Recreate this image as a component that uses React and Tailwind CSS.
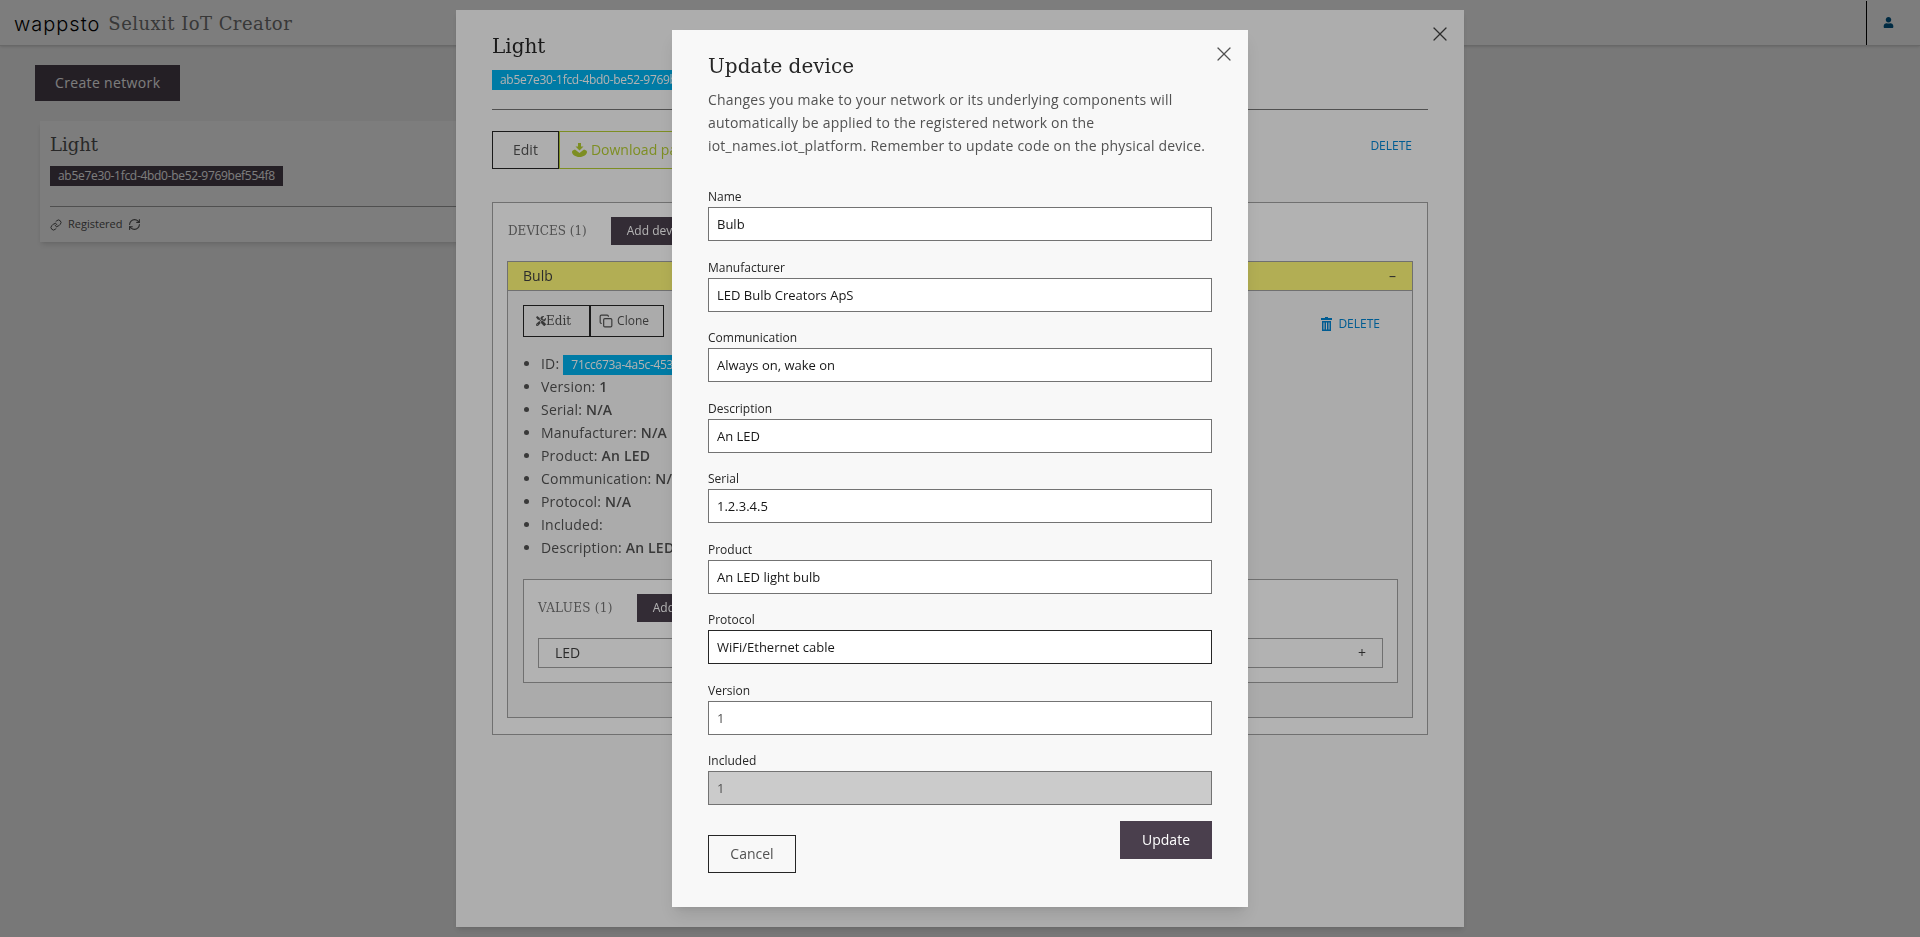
import React from 'react'
import { X, Link, RefreshCw, Copy } from 'lucide-react'
import { FaUser, FaTools } from 'react-icons/fa'

const sans = { fontFamily: '"Open Sans", sans-serif' }
const slab = { fontFamily: '"DejaVu Serif", serif' }

const fields = [
  { label: 'Name', value: 'Bulb' },
  { label: 'Manufacturer', value: 'LED Bulb Creators ApS' },
  { label: 'Communication', value: 'Always on, wake on' },
  { label: 'Description', value: 'An LED' },
  { label: 'Serial', value: '1.2.3.4.5' },
  { label: 'Product', value: 'An LED light bulb' },
  { label: 'Protocol', value: 'WiFi/Ethernet cable', focus: true },
  { label: 'Version', value: '1', muted: true },
  { label: 'Included', value: '1', muted: true, disabled: true },
]

const details = [
  ['Version', '1'],
  ['Serial', 'N/A'],
  ['Manufacturer', 'N/A'],
  ['Product', 'An LED'],
  ['Communication', 'N/A'],
  ['Protocol', 'N/A'],
  ['Included', ''],
  ['Description', 'An LED'],
]

const DownloadIcon = () => (
  <svg width="15" height="14" viewBox="0 0 15 14" fill="currentColor">
    <rect x="6" y="0" width="3" height="4" />
    <path d="M3.5 3.5h8L7.5 7.5z" />
    <path d="M0 9c0-1.2 1.2-2 3-2.4L7.5 10 12 6.6c1.800.4 3 1.200 3 2.400C15 11.500 11.600 14 7.500 14S0 11.500 0 9z" />
  </svg>
)

const TrashIcon = () => (
  <svg width="11" height="14" viewBox="0 0 11 14" fill="currentColor">
    <path d="M4 0h3v1h4v2H0V1h4z" />
    <path fillRule="evenodd" d="M1 4h9v10H1zM2.500 5.500v7h1v-7zM5 5.500v7h1v-7zM7.500 5.500v7h1v-7z" />
  </svg>
)

const Page = () => (
  <div className="min-h-screen bg-neutral-100">
    <header className="flex h-11.5 items-center justify-between border-b border-neutral-300 bg-white shadow-sm">
      <div className="flex items-center pt-0.5">
        <span className="ml-3.5 text-xl font-light tracking-wider text-black" style={{ fontFamily: 'Inter, sans-serif' }}>wappsto</span>
        <span className="ml-2 text-lg tracking-wide text-neutral-500" style={slab}>Seluxit IoT Creator</span>
      </div>
      <div className="flex h-11 w-13.5 items-center border-l border-black pl-4 text-sky-800">
        <FaUser size={11} />
      </div>
    </header>
    <button className="ml-8.75 mt-4.75 bg-[#4a3f4d] px-5 py-2 text-sm tracking-wide text-white" style={sans}>Create network</button>
    <div className="ml-10 mt-5 w-lg bg-white px-2.5 shadow-md" style={sans}>
      <h2 className="pt-3 text-lg leading-6 text-neutral-600" style={slab}>Light</h2>
      <span className="mt-2.25 inline-block bg-[#4a3f4d] px-2 py-0.5 text-xs tracking-tight text-white">ab5e7e30-1fcd-4bd0-be52-9769bef554f8</span>
      <div className="mt-5 flex h-9 items-center gap-1.5 border-t border-neutral-400 text-[11px] text-neutral-600">
        <Link size={12} />
        <span>Registered</span>
        <RefreshCw size={13} />
      </div>
    </div>
  </div>
)

const Network = () => (
  <div className="relative mt-2.5 h-[917px] w-[1008px] bg-[#f8f8f8] px-9 shadow-md" style={sans}>
    <X className="absolute right-3 top-3 text-neutral-700" size={24} strokeWidth={1.2} />
    <h1 className="pt-6 text-xl leading-6 text-neutral-800" style={slab}>Light</h1>
    <span className="mt-3 inline-block bg-[#00b0ec] px-2 py-0.5 text-xs tracking-tight text-white">ab5e7e30-1fcd-4bd0-be52-9769bef554f8</span>
    <div className="mt-4.75 border-t border-neutral-500" />
    <div className="mt-5.25 flex items-center">
      <button className="border border-neutral-800 px-5 py-2 text-sm text-neutral-600">Edit</button>
      <button className="flex items-center gap-1 border border-[#b4cc33] px-3 py-2 text-sm text-[#b4cc33]">
        <DownloadIcon />
        Download package
      </button>
      <span className="ml-auto mr-4 pb-2 text-xs text-sky-600">DELETE</span>
    </div>

    <section className="mt-8.25 border border-neutral-400 bg-white px-3.5 pb-4">
      <div className="flex items-center pt-3.5">
        <span className="pl-px text-xs text-neutral-500" style={slab}>DEVICES (1)</span>
        <button className="ml-6 bg-[#4a3f4d] px-4 py-1.5 text-xs text-white">Add device</button>
      </div>
      <div className="mt-4 border border-neutral-400 bg-neutral-100">
        <div className="flex h-7 items-center justify-between bg-[#fffa79] pl-3.75 pr-4 text-sm text-neutral-700">
          <span>Bulb</span>
          <span>–</span>
        </div>
        <div className="border-t border-neutral-400 pb-8.5 pl-3.75 pr-3.5">
          <div className="flex items-center pt-3.5">
            <button className="flex h-8 items-center border border-neutral-800 pl-3 pr-4.5 text-xs text-neutral-600" style={slab}>
              <FaTools size={10} />
              Edit
            </button>
            <button className="flex h-8 items-center gap-1 border border-neutral-800 pl-2 pr-3.5 text-xs text-neutral-600">
              <Copy size={14} />
              Clone
            </button>
            <span className="ml-auto mr-4.5 mt-1.5 flex items-center gap-1.5 text-xs text-sky-600">
              <TrashIcon />
              DELETE
            </span>
          </div>
          <ul className="mt-3.75 list-disc pl-4.5 text-sm leading-5.75 tracking-[0.2px] text-neutral-600">
            <li>
              ID:
              <span className="ml-1 inline-block bg-[#00b0ec] px-2 text-xs leading-5 tracking-tight text-white">71cc673a-4a5c-4531-9c1e-8a1f0d3e5b77</span>
            </li>
            {details.map((item) => (
              <li key={item[0]}>
                {item[0]}: <b className="font-semibold">{item[1]}</b>
              </li>
            ))}
          </ul>
          <div className="mt-5 border border-neutral-400 bg-white px-3.5 pb-3.5">
            <div className="flex items-center pt-3.5">
              <span className="text-xs tracking-wide text-neutral-500" style={slab}>VALUES (1)</span>
              <button className="ml-6 bg-[#4a3f4d] px-4 py-1.5 text-xs text-white">Add value</button>
            </div>
            <div className="mt-4 flex h-7.5 items-center justify-between border border-neutral-400 px-4 text-sm text-neutral-700">
              <span>LED</span>
              <span>+</span>
            </div>
          </div>
        </div>
      </div>
    </section>
  </div>
)

const UpdateDevice = () => (
  <div className="relative mt-7.5 h-[877px] w-xl bg-[#f8f8f8] px-9 pt-6 shadow-lg" style={sans}>
    <X className="absolute right-3 top-3 text-neutral-600" size={24} strokeWidth={1.2} />
    <h1 className="text-xl leading-6 text-neutral-800" style={slab}>Update device</h1>
    <p className="mt-2.75 text-sm leading-relaxed tracking-[0.2px] text-neutral-600">
      Changes you make to your network or its underlying components will automatically be applied to the registered network on the iot_names.iot_platform. Remember to update code on the physical device.
    </p>
    <form className="mt-7.5 flex h-[618px] flex-col justify-between">
      {fields.map((field) => (
        <label key={field.label} className="block text-xs leading-5 text-neutral-800">
          {field.label}
          <input
            readOnly
            value={field.value}
            className={
              'block h-8.5 w-full border px-2 text-[13px] outline-none ' +
              (field.focus ? 'border-neutral-800 ' : 'border-neutral-500 ') +
              (field.disabled ? 'bg-[#cbcbcb] ' : 'bg-white ') +
              (field.muted ? 'text-neutral-600' : 'text-neutral-900')
            }
          />
        </label>
      ))}
    </form>
    <div className="mt-4 flex items-start justify-between">
      <button className="mt-3.5 w-22 border border-neutral-800 py-2 text-sm text-neutral-600">Cancel</button>
      <button className="bg-[#4a3f4d] px-5.5 py-2 text-sm leading-5.5 text-white">Update</button>
    </div>
  </div>
)

export default function App() {
  return (
    <div className="relative h-screen overflow-hidden">
      <Page />
      <div className="fixed inset-0 flex items-start justify-center bg-black/30">
        <Network />
      </div>
      <div className="fixed inset-0 flex items-start justify-center bg-black/30">
        <UpdateDevice />
      </div>
    </div>
  )
}
